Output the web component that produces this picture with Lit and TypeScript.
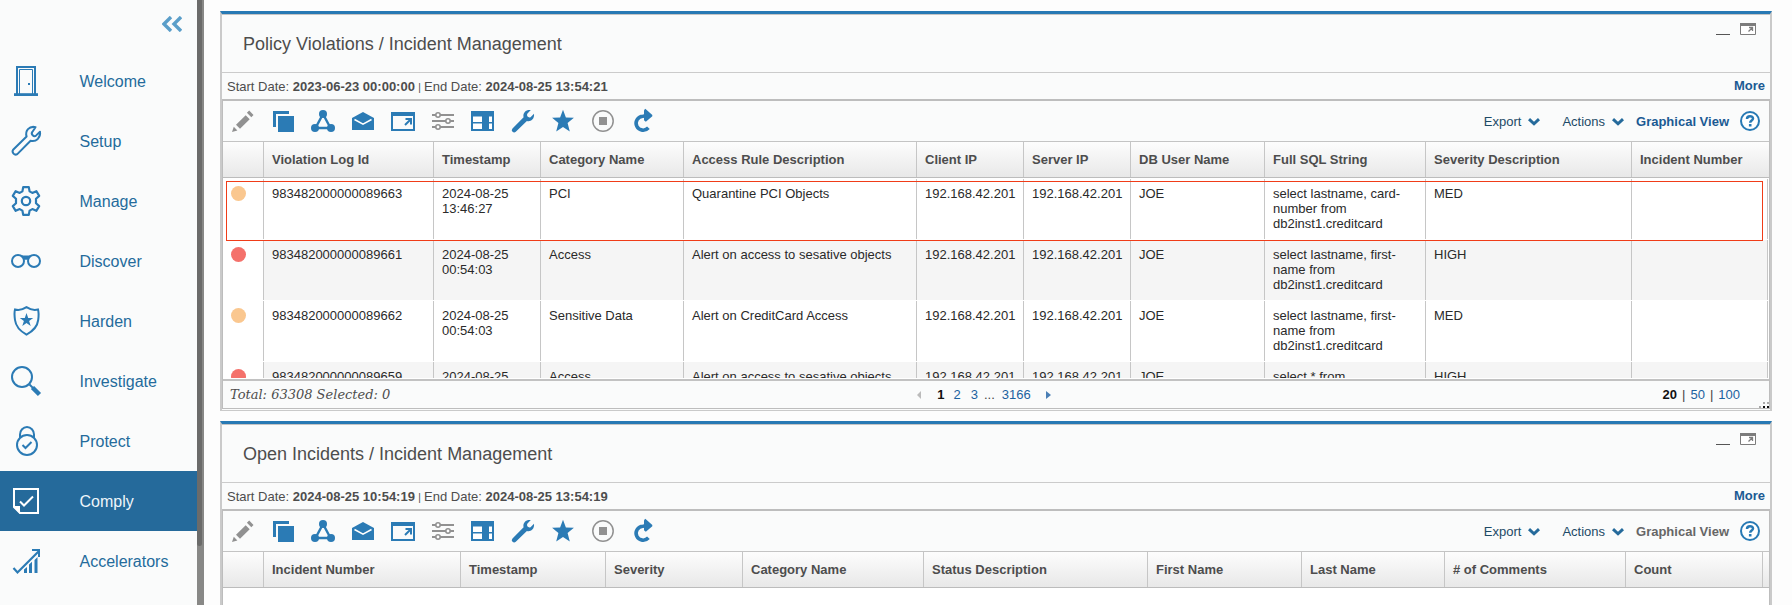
import { LitElement, html, css, svg } from "lit";
import { customElement, property } from "lit/decorators.js";
import { classMap } from "lit/directives/class-map.js";

const B = "#2b7bb5";
const G = "#919191";

const navIcons: Record<string, unknown> = {
  Welcome: svg`<path d="M17 1H7v27h16V1z" fill="none" stroke="none"/><path d="M6 29V1h18v28" fill="none" stroke=${B} stroke-width="2"/><path d="M8.500 28V3.500h13V28" fill="none" stroke=${B} stroke-width="1"/><path d="M3 27.200h24V30H3z" fill=${B}/><path d="M17 17h2v2h-2z" fill=${B}/>`,
  Setup: svg`<path d="M24.500 1.200c-3-.8-5.500-.1-7.500 1.900-1.900 2.100-2.200 4.800-1.400 7.400L2.100 23.800a3.100 3.100 0 0 0 4.200 4.300L19.600 14.700c2.500.7 5.200.1 7.200-1.800 1.800-1.800 2.600-4.300 2.200-7.200l-3.800 3.700c-1 .9-2.500.9-3.500-.1s-1.100-2.600-.2-3.600z" fill="none" stroke=${B} stroke-width="2" stroke-linejoin="round"/>`,
  Manage: svg`<path d="M12.200 1.200h5.600l.8 4.200 2.700 1.500 4-1.700 2.900 4.700-3.200 2.900v4.400l3.200 2.900-2.900 4.700-4-1.700-2.700 1.500-.8 4.200h-5.600l-.8-4.200-2.700-1.500-4 1.700-2.900-4.700L5 17.200v-4.400L1.800 9.900l2.900-4.700 4 1.700 2.700-1.500z" fill="none" stroke=${B} stroke-width="2.200" stroke-linejoin="round"/><circle cx="15" cy="15" r="4.200" fill="none" stroke=${B} stroke-width="2.200"/>`,
  Discover: svg`<circle cx="7" cy="15" r="6" fill="none" stroke=${B} stroke-width="2"/><circle cx="23" cy="15" r="6" fill="none" stroke=${B} stroke-width="2"/><path d="M10 8.800l2 .8h6l2-.8-3 5h-4z" fill=${B}/>`,
  Harden: svg`<path d="M4 3.500c4 1.200 7.500.3 11.500-2.300 4 2.600 7 3.500 11.500 2.300.6 2 .8 6 .2 10.500-.8 6.500-5 11-11.700 14.600C9 25 4.800 20.500 4 14c-.6-4.500-.6-8.500 0-10.500z" fill="none" stroke=${B} stroke-width="2"/><path d="M15.500 7l1.700 5h5l-4.100 3 1.600 5-4.200-3.100-4.200 3.100 1.600-5-4.100-3h5z" fill=${B}/>`,
  Investigate: svg`<circle cx="11" cy="11" r="10" fill="none" stroke=${B} stroke-width="2"/><path d="M18.500 18.500l3.500 3.500" stroke=${B} stroke-width="2"/><path d="M21.500 21.500l7 7" stroke=${B} stroke-width="4.500"/>`,
  Protect: svg`<circle cx="16" cy="19" r="10" fill="none" stroke=${B} stroke-width="2"/><path d="M9 12V8.500a7 7.500 0 0 1 14 0V12" fill="none" stroke=${B} stroke-width="2"/><path d="M11.500 19l3 3 6-6" fill="none" stroke=${B} stroke-width="2"/>`,
  Comply: svg`<path d="M3 3h24v24H9l-6-6z" fill="none" stroke="#fff" stroke-width="2"/><path d="M2 20h7v8z" fill="#fff"/><path d="M9 15.500l4 4 9-9" fill="none" stroke="#fff" stroke-width="2"/>`,
  Accelerators: svg`<path d="M2.500 22l4 4.500L28 5" fill="none" stroke=${B} stroke-width="2.200"/><path d="M21 3h8v8h-2V5h-6z" fill=${B}/><path d="M13 23.500l3-2.500v6h-3zM18 18.500l3-2.800V27h-3zM23.500 14l3-3v16h-3z" fill=${B}/>`,
};

const toolIcons: unknown[] = [
  svg`<path d="M5 15.800l9.700-9.600 4 4L9 19.800zM15.900 3.800L18.200 1.600l4.300 4.300-2.200 2.400zM1 23l1.800-5.200 3.600 3.600z" fill=${G}/>`,
  svg`<path d="M2 2h16v3H5v13H2z" fill=${B}/><path d="M7 7h16v16H7z" fill=${B}/>`,
  svg`<path d="M12 5L4.500 19h15z" fill="none" stroke=${B} stroke-width="2.400"/><circle cx="12" cy="5" r="4" fill=${B}/><circle cx="4" cy="19" r="4" fill=${B}/><circle cx="20" cy="19" r="4" fill=${B}/>`,
  svg`<path d="M1 9l11-6L23 9v12H1z" fill=${B}/><path d="M3.500 10.500L12 15.200l8.500-4.700" fill="none" stroke="#fff" stroke-width="1.500"/>`,
  svg`<path d="M1 4h22v17H1z" fill="none" stroke=${B} stroke-width="2"/><path d="M0 3h24v4H0z" fill=${B}/><path d="M14.500 9H21v6.500h-2V12.400l-4.300 4.300-1.400-1.400L17.600 11h-3.100z" fill=${B}/>`,
  svg`<path d="M1 6h22M1 12h22M1 18h22" stroke=${G} stroke-width="2"/><g fill="#fff" stroke=${G} stroke-width="1.600"><circle cx="7" cy="6" r="2.200"/><circle cx="17" cy="12" r="2.200"/><circle cx="7" cy="18" r="2.200"/></g>`,
  svg`<path d="M0 2h23v20H0z" fill=${B}/><path d="M2 7.500h9v5.500H2zM2 14.500h9v5.500H2zM18 7.500h3v5.500h-3zM18 14.500h3v5.500h-3z" fill="#fff"/>`,
  svg`<path d="M19.800 1c-2.500-.3-4.600.3-6 1.900-1.400 1.500-1.700 3.600-1.200 5.400L1.500 19.400a2.300 2.300 0 0 0 3.300 3.300L15.900 12c1.900.5 4 .1 5.400-1.400 1.400-1.400 2-3.400 1.700-5.900l-3.500 3.500c-2 .9-4.200-1.200-3.200-3.400z" fill=${B}/>`,
  svg`<path d="M12 .8l2.900 7.700 8 .3-6.300 5.100 2.200 8.600L12 18l-6.800 4.500 2.200-8.600L1.100 8.800l8-.3z" fill=${B}/>`,
  svg`<circle cx="12" cy="12" r="10.200" fill="none" stroke=${G} stroke-width="1.500"/><path d="M8 8h8v8H8z" fill=${G}/>`,
  svg`<path d="M17.400 18.800A7 7 0 1 1 11.800 7.200L16 6.700" fill="none" stroke=${B} stroke-width="3.600"/><path d="M13 1.200L14.300-.2 21.300 6v1.200l-6.500 5.600-1.800-1.600z" fill=${B}/>`,
];

interface Column { label: string; width: number }
interface Row { sev: "med" | "high"; cells: string[] }

@customElement("side-nav")
class SideNav extends LitElement {
  static styles = css`
    :host { display: flex; flex: none; width: 204px; height: 605px; overflow: hidden; background: #fafbfb; }
    .list { width: 197px; }
    .top { height: 51px; display: flex; justify-content: flex-end; padding: 16px 15px 0 0; box-sizing: border-box; }
    .item { height: 60px; display: flex; align-items: center; padding-left: 11px; color: #246b9b; font-size: 16px; }
    .item svg { width: 30px; height: 30px; margin-right: 38.500px; flex: none; overflow: visible; }
    .item span { padding-top: 2px; }
    .item.on { background: #256a9b; color: #eef5fa; }
    .track { width: 7px; background: #888886; }
    .thumb { width: 5px; height: 546px; background: #6b6b6a; border-radius: 0 0 3px 3px; }
  `;
  render() {
    return html`
      <div class="list">
        <div class="top"><svg width="20" height="16" viewBox="0 0 20 16"><path d="M9 1L2 8l7 7M19 1l-7 7 7 7" fill="none" stroke="#5a9ec9" stroke-width="3.400"/></svg></div>
        ${Object.keys(navIcons).map((n) => html`<div class=${classMap({ item: true, on: n === "Comply" })}>
          <svg viewBox="0 0 30 30">${navIcons[n]}</svg><span>${n}</span></div>`)}
      </div>
      <div class="track"><div class="thumb"></div></div>`;
  }
}

@customElement("report-panel")
class ReportPanel extends LitElement {
  @property() heading = "";
  @property() start = "";
  @property() end = "";
  @property({ type: Boolean }) graphical = false;
  @property({ attribute: false }) columns: Column[] = [];
  @property({ attribute: false }) rows: Row[] = [];

  static styles = css`
    :host { display: block; width: 1552px; box-sizing: border-box; border: 2px solid #cacaca; border-width: 3px 2px 1px; border-top-color: #2779b4; color: #4d4d4d; font-size: 13px; background: #fafbfb; }
    .title { height: 59px; box-sizing: border-box; border-top: 1px solid #c4c4c4; border-bottom: 1px solid #cbcbcb; display: flex; justify-content: space-between; padding: 0 14px 0 21px; }
    h2 { margin: 0; font-weight: normal; font-size: 18px; line-height: 58px; }
    .win { display: flex; gap: 10px; padding-top: 8px; align-items: flex-start; }
    .meta { height: 26px; display: flex; justify-content: space-between; line-height: 27px; padding: 0 5px; }
    .bar { font-size: 10px; margin: 0 .5px; }
    .more { font-weight: bold; color: #1b5a93; line-height: 25px; }
    .grid { border: 1px solid #bdbdbd; border-top-width: 2px; margin-bottom: 1px; position: relative; }
    .tools { height: 40px; border-bottom: 1px solid #c4c4c4; display: flex; align-items: center; padding: 0 9px 0 8px; color: #1d4a66; }
    .tool { width: 24px; height: 24px; margin-right: 16px; overflow: visible; }
    .fill { flex: 1; }
    .menu { display: flex; align-items: center; margin-right: 22px; padding-top: 1px; }
    .menu svg { margin-left: 7px; }
    .menu + .menu { margin-right: 12px; }
    .gv { font-weight: bold; color: #666; margin-right: 11px; }
    .gv.live { color: #1b5a93; }
    .cols { display: flex; height: 35px; border-bottom: 1px solid #bcbcbc; background: linear-gradient(#fdfdfd, #e8e8e8); font-weight: bold; line-height: 35px; }
    .cols div, .cell { box-sizing: border-box; flex: none; border-right: 1px solid #c6c6c6; padding-left: 8px; }
    .cols.last-open div:last-child { border-right-color: transparent; }
    .body { height: 201px; overflow: hidden; background: #fff; padding-top: 1px; border-bottom: 1px solid #fff; box-sizing: border-box; }
    .row { display: flex; height: 60px; margin-bottom: 1px; color: #2a2a2a; line-height: 15px; }
    .cell { padding-top: 7px; height: 60px; }
    .cell.text { white-space: pre-line; }
    .row:nth-child(even) .text { background: #f5f5f5; }
    .dot { width: 15px; height: 15px; border-radius: 50%; }
    .med { background: #fac78f; }
    .high { background: #f4716b; }
    .pick { position: absolute; left: 3px; top: 80px; width: 1537px; height: 60px; border: 1px solid #f03c18; box-sizing: border-box; }
    .foot { height: 27px; border-top: 2px solid #c2c2c2; display: grid; grid-template-columns: 1fr auto 1fr; align-items: center; }
    .total { font: italic 13px "DejaVu Serif", serif; padding-left: 7px; }
    .pages { display: flex; align-items: center; color: #1c62a0; margin-right: 24px; }
    .pages b, .sizes b { color: #111; }
    .pages b { margin: 0 9px 0 16px; }
    .three { margin: 0 6px 0 10px; }
    .last { margin: 0 15px 0 7px; }
    .sizes { margin-left: -24px; text-align: right; padding-right: 29px; color: #1c62a0; }
    .sep, .dots { color: #444; }
    .sep { margin: 0 1.400px; }
    .grip { position: absolute; right: 0; bottom: 0; }
  `;

  private menu(label: string) {
    return html`<div class="menu">${label}<svg width="12" height="8" viewBox="0 0 12 8"><path d="M1 1.200l5 4.600 5-4.600" fill="none" stroke="#256a9b" stroke-width="3"/></svg></div>`;
  }

  render() {
    return html`
      <div class="title"><h2>${this.heading}</h2>
        <div class="win">
          <svg width="14" height="12"><path d="M0 11.500h14" stroke="#555" stroke-width="1"/></svg>
          <svg width="16" height="12" viewBox="0 0 16 12"><path d="M.5.500h15v11H.5z" fill="#fff" stroke="#7c7c7c"/><path d="M0 0h16v3H0z" fill="#7c7c7c"/><path d="M9 4.500h3.500V8M12.500 4.500l-4 4" fill="none" stroke="#7c7c7c" stroke-width="1.300"/></svg>
        </div></div>
      <div class="meta"><span>Start Date: <b>${this.start}</b><span class="bar"> | </span>End Date: <b>${this.end}</b></span><span class="more">More</span></div>
      <div class="grid">
        <div class="tools">
          ${toolIcons.map((i) => html`<svg class="tool" viewBox="0 0 24 24">${i}</svg>`)}
          <span class="fill"></span>${this.menu("Export")}${this.menu("Actions")}
          <span class=${classMap({ gv: true, live: this.graphical })}>Graphical View</span>
          <svg width="20" height="20" viewBox="0 0 20 20"><circle cx="10" cy="10" r="9" fill="#fff" stroke="#2779b4" stroke-width="2"/><path d="M7 8c0-3.800 6-3.600 6-.4 0 2-2.800 1.900-2.800 4.200" fill="none" stroke="#2779b4" stroke-width="2.500"/><path d="M8.900 13h2.600v2.500H8.900z" fill="#2779b4"/></svg>
        </div>
        <div class=${classMap({ cols: true, "last-open": this.rows.length > 0 })}>${this.columns.map((c) => html`<div style="width:${c.width}px">${c.label}</div>`)}</div>
        <div class="body">${this.rows.map((r) => html`<div class="row">
          <div class="cell" style="width:${this.columns[0].width}px"><div class="dot ${r.sev}"></div></div>
          ${r.cells.map((c, i) => html`<div class="cell text" style="width:${this.columns[i + 1].width}px">${c}</div>`)}</div>`)}
        </div>
        ${this.rows.length ? html`<div class="pick"></div>
        <div class="foot">
          <span class="total">Total: 63308 Selected: 0</span>
          <span class="pages"><svg width="4" height="8"><path d="M4 0v8L0 4z" fill="#bbb"/></svg><b>1</b>2<span class="three">3</span><span class="dots">...</span><span class="last">3166</span><svg width="5" height="8"><path d="M0 0v8l5-4z" fill="#4a7fb5"/></svg></span>
          <span class="sizes"><b>20</b> <span class="sep">|</span> 50 <span class="sep">|</span> 100</span>
        </div>
        <svg class="grip" width="10" height="10"><path d="M4 8h2v2H4zM8 8h2v2H8z" fill="#111"/><path d="M4 4h2v2H4zM8 4h2v2H8zM0 8h2v2H0z" fill="#aaa"/></svg>` : ""}
      </div>`;
  }
}

const violationCols: Column[] = [
  { label: "", width: 41 }, { label: "Violation Log Id", width: 170 }, { label: "Timestamp", width: 107 },
  { label: "Category Name", width: 143 }, { label: "Access Rule Description", width: 233 }, { label: "Client IP", width: 107 },
  { label: "Server IP", width: 107 }, { label: "DB User Name", width: 134 }, { label: "Full SQL String", width: 161 },
  { label: "Severity Description", width: 206 }, { label: "Incident Number", width: 136 },
];
const incidentCols: Column[] = [
  { label: "", width: 41 }, { label: "Incident Number", width: 197 }, { label: "Timestamp", width: 145 },
  { label: "Severity", width: 137 }, { label: "Category Name", width: 181 }, { label: "Status Description", width: 224 },
  { label: "First Name", width: 154 }, { label: "Last Name", width: 143 }, { label: "# of Comments", width: 181 }, { label: "Count", width: 137 },
];
const ip = "192.168.42.201";
const row = (sev: Row["sev"], id: string, time: string, cat: string, rule: string, sql: string): Row => ({
  sev, cells: [id, time, cat, rule, ip, ip, "JOE", sql, sev === "med" ? "MED" : "HIGH", ""],
});
const violations: Row[] = [
  row("med", "983482000000089663", "2024-08-25\n13:46:27", "PCI", "Quarantine PCI Objects", "select lastname, card-\nnumber from\ndb2inst1.creditcard"),
  row("high", "983482000000089661", "2024-08-25\n00:54:03", "Access", "Alert on access to sesative objects", "select lastname, first-\nname from\ndb2inst1.creditcard"),
  row("med", "983482000000089662", "2024-08-25\n00:54:03", "Sensitive Data", "Alert on CreditCard Access", "select lastname, first-\nname from\ndb2inst1.creditcard"),
  row("high", "983482000000089659", "2024-08-25", "Access", "Alert on access to sesative objects", "select * from"),
];

@customElement("app-root")
class AppRoot extends LitElement {
  static styles = css`
    :host { display: flex; height: 605px; overflow: hidden; background: #fdfdfd; font-family: "Liberation Sans", Arial, sans-serif; }
    .main { padding: 11px 0 0 16px; display: flex; flex-direction: column; gap: 10px; }
  `;
  render() {
    return html`<side-nav></side-nav>
      <div class="main">
        <report-panel heading="Policy Violations / Incident Management" start="2023-06-23 00:00:00" end="2024-08-25 13:54:21" graphical .columns=${violationCols} .rows=${violations}></report-panel>
        <report-panel heading="Open Incidents / Incident Management" start="2024-08-25 10:54:19" end="2024-08-25 13:54:19" .columns=${incidentCols}></report-panel>
      </div>`;
  }
}
